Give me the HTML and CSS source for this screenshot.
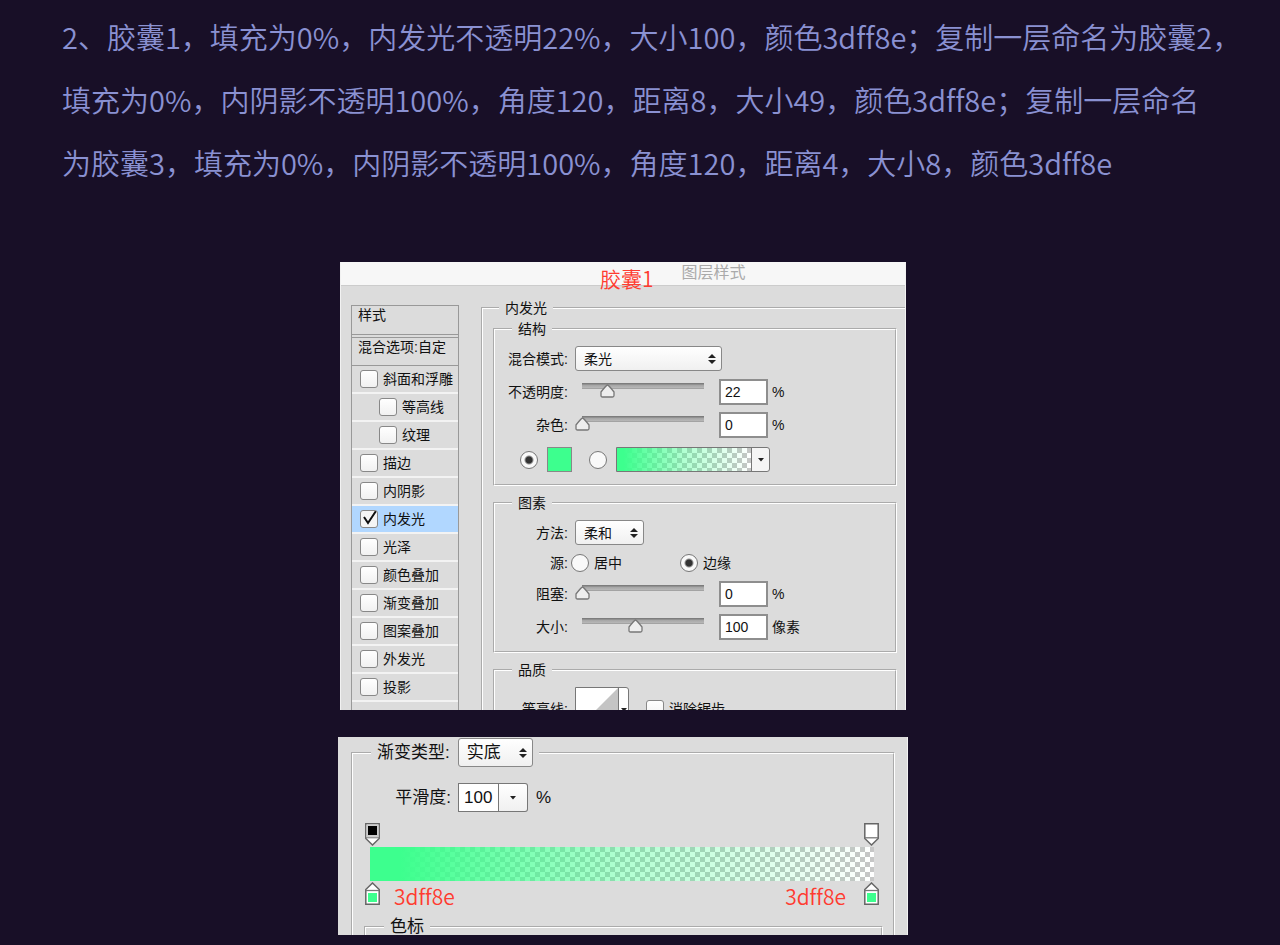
FILE: index.html
```html
<!DOCTYPE html>
<html lang="zh-CN">
<head>
<meta charset="utf-8">
<meta name="viewport" content="width=device-width, initial-scale=1">
<title>胶囊图层样式</title>
<link rel="stylesheet" href="styles.css">
</head>
<body>
<main class="page">
  <p class="intro">
    <span class="intro-line">2、胶囊1，填充为0%，内发光不透明22%，大小100，颜色3dff8e；复制一层命名为胶囊2，</span>
    <span class="intro-line">填充为0%，内阴影不透明100%，角度120，距离8，大小49，颜色3dff8e；复制一层命名</span>
    <span class="intro-line">为胶囊3，填充为0%，内阴影不透明100%，角度120，距离4，大小8，颜色3dff8e</span>
  </p>

  <section class="panel style-panel">
    <header class="titlebar">
      <span class="note title-note">胶囊1</span>
      <h2 class="title">图层样式</h2>
    </header>
    <div class="style-body">
      <div class="effects">
        <div class="effects-head">样式</div>
        <div class="effects-head effects-blend">混合选项:自定</div>
        <label class="effect"><input class="check" type="checkbox">斜面和浮雕</label>
        <label class="effect nested"><input class="check" type="checkbox">等高线</label>
        <label class="effect nested"><input class="check" type="checkbox">纹理</label>
        <label class="effect"><input class="check" type="checkbox">描边</label>
        <label class="effect"><input class="check" type="checkbox">内阴影</label>
        <label class="effect selected"><input class="check" type="checkbox" checked>内发光</label>
        <label class="effect"><input class="check" type="checkbox">光泽</label>
        <label class="effect"><input class="check" type="checkbox">颜色叠加</label>
        <label class="effect"><input class="check" type="checkbox">渐变叠加</label>
        <label class="effect"><input class="check" type="checkbox">图案叠加</label>
        <label class="effect"><input class="check" type="checkbox">外发光</label>
        <label class="effect"><input class="check" type="checkbox">投影</label>
        <div class="effects-rest"></div>
      </div>

      <fieldset class="group glow">
        <legend class="legend glow-legend">内发光</legend>

        <fieldset class="group section">
          <legend class="legend">结构</legend>
          <div class="rows">
            <div class="row">
              <label class="name" for="blend">混合模式:</label>
              <select class="select select-wide" id="blend"><option>柔光</option></select>
            </div>
            <div class="row">
              <label class="name" for="opacity">不透明度:</label>
              <input class="slider" type="range" value="21" aria-label="不透明度滑块">
              <input class="number" id="opacity" type="text" value="22"><span class="unit">%</span>
            </div>
            <div class="row">
              <label class="name" for="noise">杂色:</label>
              <input class="slider" type="range" value="0" aria-label="杂色滑块">
              <input class="number" id="noise" type="text" value="0"><span class="unit">%</span>
            </div>
            <div class="fill-row">
              <input class="radio" type="radio" name="fill" aria-label="纯色" checked>
              <button class="swatch" type="button" aria-label="发光颜色"></button>
              <input class="radio radio-second" type="radio" name="fill" aria-label="渐变">
              <button class="gradient-picker" type="button" aria-label="选择渐变">
                <span class="gradient-preview"></span>
                <span class="picker-arrow"></span>
              </button>
            </div>
          </div>
        </fieldset>

        <fieldset class="group section">
          <legend class="legend">图素</legend>
          <div class="rows">
            <div class="row">
              <label class="name" for="method">方法:</label>
              <select class="select" id="method"><option>柔和</option></select>
            </div>
            <div class="row source-row">
              <span class="name">源:</span>
              <label class="source"><input class="radio" type="radio" name="source">居中</label>
              <label class="source"><input class="radio" type="radio" name="source" checked>边缘</label>
            </div>
            <div class="row">
              <label class="name" for="choke">阻塞:</label>
              <input class="slider" type="range" value="0" aria-label="阻塞滑块">
              <input class="number" id="choke" type="text" value="0"><span class="unit">%</span>
            </div>
            <div class="row">
              <label class="name" for="size">大小:</label>
              <input class="slider" type="range" value="44" aria-label="大小滑块">
              <input class="number" id="size" type="text" value="100"><span class="unit">像素</span>
            </div>
          </div>
        </fieldset>

        <fieldset class="group section">
          <legend class="legend">品质</legend>
          <div class="rows">
            <div class="row quality-row">
              <span class="name">等高线:</span>
              <button class="contour" type="button" aria-label="等高线">
                <svg class="contour-curve" viewBox="0 0 42 42" aria-hidden="true"><path d="M0 42 L42 0 V42 Z" fill="#c4c4c4"/></svg>
                <span class="contour-arrow"></span>
              </button>
              <label class="antialias"><input class="check" type="checkbox">消除锯齿</label>
            </div>
          </div>
        </fieldset>
      </fieldset>
    </div>
  </section>

  <section class="panel gradient-panel">
    <fieldset class="group gradient-group">
      <legend class="type-legend">
        <label for="type">渐变类型:</label>
        <select class="select select-large" id="type"><option>实底</option></select>
      </legend>
      <div class="smooth-row">
        <label class="smooth-name" for="smooth">平滑度:</label>
        <span class="combo">
          <input class="combo-value" id="smooth" type="text" value="100">
          <button class="combo-button" type="button" aria-label="平滑度选项"></button>
        </span>
        <span class="smooth-unit">%</span>
      </div>
      <div class="stops">
        <svg class="stop" viewBox="0 0 15 23" aria-hidden="true"><path d="M.8 .8H14.2V15.5L7.5 22L.8 15.5Z" fill="#fff" stroke="#666" stroke-width="1.5"/><path d="M1.5 1.5H13.5V14.5H1.5Z" fill="#ccc"/><path d="M.8 14.8H14.2" stroke="#777"/><path d="M3 3H12V12H3Z" fill="#000"/></svg>
        <svg class="stop" viewBox="0 0 15 23" aria-hidden="true"><path d="M.8 .8H14.2V15.5L7.5 22L.8 15.5Z" fill="#fff" stroke="#666" stroke-width="1.5"/><path d="M.8 14.8H14.2" stroke="#777" stroke-width="1.3"/></svg>
      </div>
      <div class="gradient-bar"></div>
      <div class="stops">
        <svg class="stop" viewBox="0 0 15 23" aria-hidden="true"><path d="M.8 22.2H14.2V7.5L7.5 1L.8 7.5Z" fill="#fff" stroke="#666" stroke-width="1.5"/><path d="M.8 8.5H14.2" stroke="#777" stroke-width="1.3"/><path d="M3 11H12V20H3Z" fill="#3dff8e"/></svg>
        <span class="note">3dff8e</span>
        <span class="note note-end">3dff8e</span>
        <svg class="stop" viewBox="0 0 15 23" aria-hidden="true"><path d="M.8 22.2H14.2V7.5L7.5 1L.8 7.5Z" fill="#fff" stroke="#666" stroke-width="1.5"/><path d="M.8 8.5H14.2" stroke="#777" stroke-width="1.3"/><path d="M3 11H12V20H3Z" fill="#3dff8e"/></svg>
      </div>
      <fieldset class="group stop-group">
        <legend class="stop-legend">色标</legend>
      </fieldset>
    </fieldset>
  </section>
</main>
</body>
</html>
```

FILE: styles.css
```css
:root {
  --green: #3dff8e;
  --ui: #dcdcdc;
  --line: #999;
  --arrow: url("data:image/svg+xml,%3Csvg xmlns='http://www.w3.org/2000/svg' viewBox='0 0 8 5'%3E%3Cpath d='M1 1h6L4 4.500z' fill='%23222'/%3E%3C/svg%3E");
  --arrows: url("data:image/svg+xml,%3Csvg xmlns='http://www.w3.org/2000/svg' viewBox='0 0 8 12'%3E%3Cpath d='M0 5L4 1l4 4zM0 7L4 11l4-4z' fill='%23222'/%3E%3C/svg%3E");
  --checker: conic-gradient(#fff 25%, #c6c6c6 0 50%, #fff 0 75%, #c6c6c6 0);
}

* {
  box-sizing: border-box;
}

body {
  margin: 0;
  background: #180f27;
  color: #111;
  font: 14px/20px "Liberation Sans", "Noto Sans CJK SC", sans-serif;
}

input,
select,
button {
  margin: 0;
  padding: 0;
  color: inherit;
  font: inherit;
}

.page {
  padding: 5px 34px 10px 0;
}

/* Introduction */

.intro {
  margin: 0 0 68px 62px;
  color: #8a91d2;
  font: 350 29px/63px "Noto Sans CJK SC", sans-serif;
  font-variant-ligatures: none;
}

.intro-line {
  display: block;
  white-space: nowrap;
}

.note {
  color: #ff3b30;
  font: 350 21px/24px "Noto Sans CJK SC", sans-serif;
  font-variant-ligatures: none;
}

/* Panels */

.panel {
  margin: 0 auto;
  overflow: hidden;
  background: var(--ui);
}

.group {
  min-width: 0;
  margin: 0;
  padding: 0;
  border: 2px groove #fff;
}

.legend {
  padding: 0 6px;
  line-height: 16px;
}

/* Layer style dialog */

.style-panel {
  max-width: 566px;
  max-height: 448px;
  border-left: 1px solid #f2f2f2;
  border-right: 1px solid #f2f2f2;
}

.titlebar {
  display: flex;
  gap: 28px;
  height: 24px;
  padding-left: 259px;
  border-bottom: 1px solid #ccc;
  background: #f7f7f7;
}

.title-note {
  line-height: 32px;
}

.title {
  margin: 0;
  color: #aaa;
  font-size: 16px;
  font-weight: 400;
  line-height: 22px;
}

.style-body {
  display: flex;
  align-items: flex-start;
  gap: 22px;
  padding: 14px 0 0 10px;
}

.effects {
  flex: none;
  width: 108px;
  margin-top: 5px;
  border: 1px solid var(--line);
}

.effects-head {
  height: 29px;
  padding-left: 6px;
  border-bottom: 1px solid var(--line);
  line-height: 18px;
}

.effects-blend {
  margin-top: 2px;
  border-top: 1px solid var(--line);
  white-space: nowrap;
}

.effect {
  display: flex;
  align-items: center;
  gap: 5px;
  height: 28px;
  padding-left: 8px;
  border-bottom: 2px solid #f3f3f3;
  white-space: nowrap;
}

.nested {
  padding-left: 27px;
}

.selected {
  background: #b1d7ff;
}

.effects-rest {
  height: 28px;
}

.check {
  flex: none;
  width: 18px;
  height: 18px;
  appearance: none;
  border: 1px solid #888;
  border-radius: 3px;
  background: linear-gradient(#fff, #f1f1f1);
}

.check:checked {
  background: url("data:image/svg+xml,%3Csvg xmlns='http://www.w3.org/2000/svg' viewBox='0 0 16 16'%3E%3Cpath d='M3 6l4 6L15 0' fill='none' stroke='%23111' stroke-width='2'/%3E%3C/svg%3E") #f5f5f5;
}

.glow {
  flex: 1;
  padding-left: 10px;
  border-right: 0;
}

.glow-legend {
  margin-left: 6px;
}

.section {
  margin: 5px 8px 0 0;
}

.section .legend {
  margin-left: 17px;
}

.section + .section {
  margin-top: 9px;
}

.rows {
  display: grid;
  gap: 8px;
  padding: 9px 0 12px;
}

.row {
  display: flex;
  align-items: center;
  height: 25px;
}

.name {
  flex: none;
  width: 73px;
  margin-right: 7px;
  text-align: right;
}

.select {
  width: 69px;
  height: 25px;
  padding-left: 8px;
  appearance: none;
  border: 1px solid #888;
  border-radius: 3px;
  background: var(--arrows) no-repeat right 5px center / 8px 12px, linear-gradient(#fff, #f0f0f0);
}

.select-wide {
  width: 147px;
}

.slider {
  width: 136px;
  height: 25px;
  appearance: none;
  background: none;
}

.slider::-webkit-slider-runnable-track {
  height: 18px;
  background: linear-gradient(#7d7d7d 1px, #a5a5a5 2px, #b8b8b8 5px, #8e8e8e 6px) no-repeat top / calc(100% - 14px) 6px;
}

.slider::-webkit-slider-thumb {
  width: 15px;
  height: 14px;
  margin-top: 1px;
  appearance: none;
  background: url("data:image/svg+xml,%3Csvg xmlns='http://www.w3.org/2000/svg' viewBox='0 0 15 14'%3E%3Cpath d='M7.500 1Q8.500 1 14 8v3.500q0 1.500-1.500 1.500h-10Q1 13 1 11.500V8Q6.500 1 7.500 1z' fill='%23eee' stroke='%23777' stroke-width='1.300'/%3E%3C/svg%3E");
}

.number {
  width: 49px;
  height: 26px;
  margin-left: 8px;
  padding-left: 4px;
  border: 2px solid #8e8e8e;
  background: #fff;
}

.unit {
  margin-left: 4px;
}

.radio {
  flex: none;
  width: 18px;
  height: 18px;
  appearance: none;
  border: 1px solid #777;
  border-radius: 50%;
  background: #f9f9f9;
}

.radio:checked {
  background: radial-gradient(circle, #333 3px, #f9f9f9 5px);
}

.fill-row {
  display: flex;
  align-items: center;
  gap: 9px;
  height: 25px;
  margin-top: 2px;
  padding-left: 25px;
}

.swatch {
  width: 25px;
  height: 25px;
  border: 1px solid #888;
  background: var(--green);
}

.radio-second {
  margin-left: 8px;
}

.gradient-picker {
  display: flex;
  width: 154px;
  height: 25px;
  border: 1px solid #777;
  border-radius: 0 3px 3px 0;
  background: #f5f5f5;
}

.gradient-preview {
  flex: 1;
  height: 100%;
  background: linear-gradient(90deg, var(--green) 5%, rgb(61 255 142 / 40%) 50%, transparent), var(--checker) 0 0 / 10px 10px;
}

.picker-arrow {
  width: 18px;
  height: 100%;
  border-left: 1px solid #777;
  background: var(--arrow) no-repeat center / 8px 5px;
}

.source-row {
  height: 20px;
}

.source-row .name {
  margin-right: 3px;
}

.source {
  display: flex;
  align-items: center;
  gap: 5px;
  width: 109px;
}

.quality-row {
  align-items: flex-start;
  height: 44px;
}

.quality-row .name {
  line-height: 44px;
}

.contour {
  display: flex;
  width: 54px;
  height: 44px;
  border: 1px solid #777;
  border-radius: 0 3px 3px 0;
  background: #fff;
}

.contour-curve {
  width: 42px;
  height: 42px;
}

.contour-arrow {
  flex: 1;
  height: 42px;
  border-left: 1px solid #777;
  background: var(--arrow) no-repeat center / 8px 5px;
}

.antialias {
  display: flex;
  align-items: center;
  gap: 5px;
  height: 44px;
  margin-left: 17px;
}

/* Gradient editor */

.gradient-panel {
  max-width: 570px;
  max-height: 198px;
  margin-top: 27px;
  padding: 1px 12px 0 13px;
  border-right: 1px solid #f2f2f2;
  font-size: 17px;
}

.gradient-group {
  height: 240px;
}

.type-legend {
  display: flex;
  align-items: center;
  gap: 8px;
  margin-left: 18px;
  padding: 0 6px;
}

.select-large {
  width: 75px;
  height: 29px;
}

.smooth-row {
  display: flex;
  align-items: center;
  height: 29px;
  margin-top: 16px;
}

.smooth-name {
  width: 98px;
  margin-right: 7px;
  text-align: right;
}

.combo {
  display: flex;
  width: 70px;
  height: 29px;
}

.combo-value {
  width: 41px;
  padding-left: 5px;
  border: 1px solid #777;
  background: #fff;
}

.combo-button {
  flex: 1;
  border: 1px solid #777;
  border-left: 0;
  border-radius: 0 3px 3px 0;
  background: var(--arrow) no-repeat center / 8px 5px, linear-gradient(#fff, #f0f0f0);
}

.smooth-unit {
  margin-left: 8px;
}

.stops {
  display: flex;
  justify-content: space-between;
  gap: 14px;
  height: 23px;
  padding: 0 14px 0 12px;
}

.smooth-row + .stops {
  margin-top: 11px;
}

.stop {
  width: 15px;
  height: 23px;
}

.stops .note {
  line-height: 28px;
}

.note-end {
  margin-left: auto;
  margin-right: 4px;
}

.gradient-bar {
  height: 34px;
  margin: 1px 19px 1px 17px;
  background: linear-gradient(90deg, var(--green) 6%, rgb(61 255 142 / 40%) 50%, transparent), var(--checker) 0 0 / 10px 10px;
}

.stop-group {
  height: 60px;
  margin: 12px 10px 0 11px;
}

.stop-legend {
  margin-left: 18px;
  padding: 0 6px;
  line-height: 20px;
}
```
